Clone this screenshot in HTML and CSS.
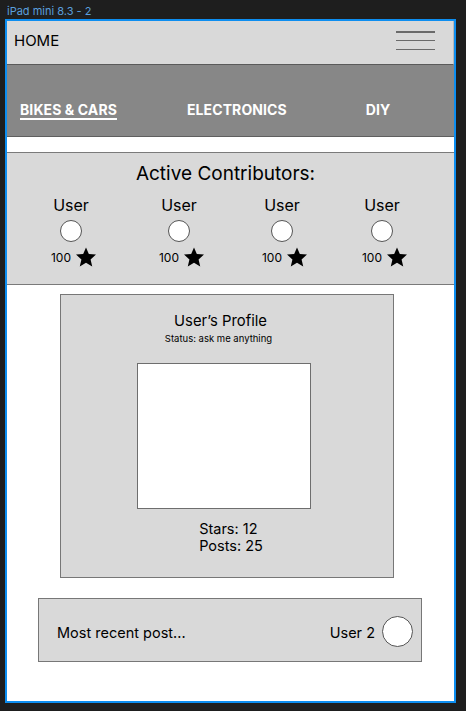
FILE: index.html
```html
<!DOCTYPE html>
<html>
<head>
<meta charset="utf-8">
<link rel="stylesheet" href="styles.css">
</head>
<body>
<div class="label">iPad mini 8.3 - 2</div>
<div class="frame">
  <header class="header">
    <span class="home">HOME</span>
    <span class="burger"><i></i><i></i><i></i></span>
  </header>
  <nav class="nav">
    <a class="nav-item active">BIKES &amp; CARS</a>
    <a class="nav-item">ELECTRONICS</a>
    <a class="nav-item last">DIY</a>
  </nav>
  <section class="contrib">
    <h2 class="contrib-title">Active Contributors:</h2>
    <div class="users">
      <div class="user">
        <div class="user-name">User</div>
        <div class="avatar"></div>
        <div class="score"><span>100</span><svg class="star" viewBox="0 0 24 24"><path d="M12 1.5l3.1 7.2 7.8.7-5.9 5.2 1.8 7.7L12 18.2l-6.8 4.1 1.8-7.7-5.9-5.2 7.8-.7z"/></svg></div>
      </div>
      <div class="user">
        <div class="user-name">User</div>
        <div class="avatar"></div>
        <div class="score"><span>100</span><svg class="star" viewBox="0 0 24 24"><path d="M12 1.5l3.1 7.2 7.8.7-5.9 5.2 1.8 7.7L12 18.2l-6.8 4.1 1.8-7.7-5.9-5.2 7.8-.7z"/></svg></div>
      </div>
      <div class="user">
        <div class="user-name">User</div>
        <div class="avatar"></div>
        <div class="score"><span>100</span><svg class="star" viewBox="0 0 24 24"><path d="M12 1.5l3.1 7.2 7.8.7-5.9 5.2 1.8 7.7L12 18.2l-6.8 4.1 1.8-7.7-5.9-5.2 7.8-.7z"/></svg></div>
      </div>
      <div class="user">
        <div class="user-name">User</div>
        <div class="avatar"></div>
        <div class="score"><span>100</span><svg class="star" viewBox="0 0 24 24"><path d="M12 1.5l3.1 7.2 7.8.7-5.9 5.2 1.8 7.7L12 18.2l-6.8 4.1 1.8-7.7-5.9-5.2 7.8-.7z"/></svg></div>
      </div>
    </div>
  </section>
  <section class="profile">
    <h3 class="profile-title">User’s Profile</h3>
    <div class="status">Status: ask me anything</div>
    <div class="photo"></div>
    <div class="stats">
      <div>Stars: 12</div>
      <div>Posts: 25</div>
    </div>
  </section>
  <section class="recent">
    <span class="recent-text">Most recent post...</span>
    <span class="recent-user">User 2 <span class="avatar big"></span></span>
  </section>
</div>
</body>
</html>
```

FILE: styles.css
```css
* { box-sizing: border-box; }
html, body { margin: 0; padding: 0; }
body {
  background: #1e1e1e;
  font-family: Inter, "Noto Sans", sans-serif;
  color: #000;
  width: 466px;
  height: 711px;
  overflow: hidden;
}
.label {
  height: 19px;
  padding: 4px 0 0 7px;
  font-size: 11px;
  line-height: 14px;
  color: #5a9fdc;
}
.frame {
  margin-left: 5px;
  width: 451px;
  height: 684px;
  border: 2px solid #0d8ef0;
  background: #fff;
  overflow: hidden;
}
.header {
  height: 44px;
  background: #d9d9d9;
  border-bottom: 1px solid #5a5a5a;
  border-right: 1px solid #b8b8b8;
  display: flex;
  align-items: center;
  justify-content: space-between;
  padding: 0 18px 0 7px;
}
.home {
  font-size: 15px;
  line-height: 18px;
  margin-top: -3px;
}
.burger {
  width: 39px;
  height: 19px;
  display: flex;
  flex-direction: column;
  justify-content: space-between;
  margin-top: -4px;
}
.burger i {
  display: block;
  height: 1.5px;
  background: #6a6a6a;
}
.nav {
  height: 72px;
  background: #878787;
  border-bottom: 1px solid #5f5f5f;
  display: flex;
  gap: 70px;
  padding: 36px 0 0 13px;
}
.nav-item {
  color: #fff;
  font-weight: 700;
  font-size: 14px;
  line-height: 17px;
  letter-spacing: 0.1px;
}
.nav-item.last {
  margin-left: 9px;
}
.nav-item.active {
  text-decoration: underline;
  text-decoration-thickness: 1.5px;
  text-underline-offset: 3px;
}
.contrib {
  margin-top: 15px;
  background: #d9d9d9;
  border-top: 1px solid #7a7a7a;
  border-bottom: 1px solid #7a7a7a;
  padding: 9px 0 17px;
}
.contrib-title {
  margin: 0;
  text-align: center;
  font-weight: 400;
  font-size: 19px;
  line-height: 23px;
  padding-right: 10px;
}
.users {
  display: grid;
  grid-template-columns: 108px 103px 100px 60px;
  padding-left: 34px;
  margin-top: 11px;
}
.user {
  width: 60px;
  display: flex;
  flex-direction: column;
  align-items: center;
}
.user-name {
  font-size: 16px;
  line-height: 19px;
}
.avatar {
  width: 22px;
  height: 22px;
  border-radius: 50%;
  background: #fff;
  border: 1px solid #555;
  margin-top: 5px;
}
.score {
  display: flex;
  align-items: center;
  margin-top: 5px;
  gap: 4px;
  height: 20px;
  margin-left: 6px;
}
.score span {
  font-size: 12px;
  line-height: 14px;
  padding-top: 2px;
}
.star {
  width: 22px;
  height: 22px;
  fill: #000;
}
.profile {
  margin: 9px 0 0 53px;
  width: 334px;
  height: 284px;
  background: #d9d9d9;
  border: 1px solid #777;
  display: flex;
  flex-direction: column;
  align-items: center;
  padding-top: 17px;
}
.profile-title {
  margin: 0;
  font-weight: 400;
  font-size: 14.8px;
  line-height: 19px;
  margin-right: 13px;
}
.status {
  font-size: 9.5px;
  line-height: 12px;
  margin-top: 2px;
  margin-right: 17px;
}
.photo {
  width: 174px;
  height: 146px;
  background: #fff;
  border: 1px solid #6e6e6e;
  margin-top: 18px;
  margin-right: 6px;
}
.stats {
  margin-top: 11px;
  font-size: 14.5px;
  line-height: 17px;
  margin-left: 8px;
}
.recent {
  margin: 20px 0 0 31px;
  width: 384px;
  height: 64px;
  background: #d9d9d9;
  border: 1px solid #777;
  display: flex;
  align-items: center;
  justify-content: space-between;
  padding: 5px 8px 0 18px;
  font-size: 14.5px;
}
.recent-user {
  display: flex;
  align-items: center;
  gap: 7px;
}
.avatar.big {
  width: 31px;
  height: 31px;
  margin-top: -2px;
}
```
